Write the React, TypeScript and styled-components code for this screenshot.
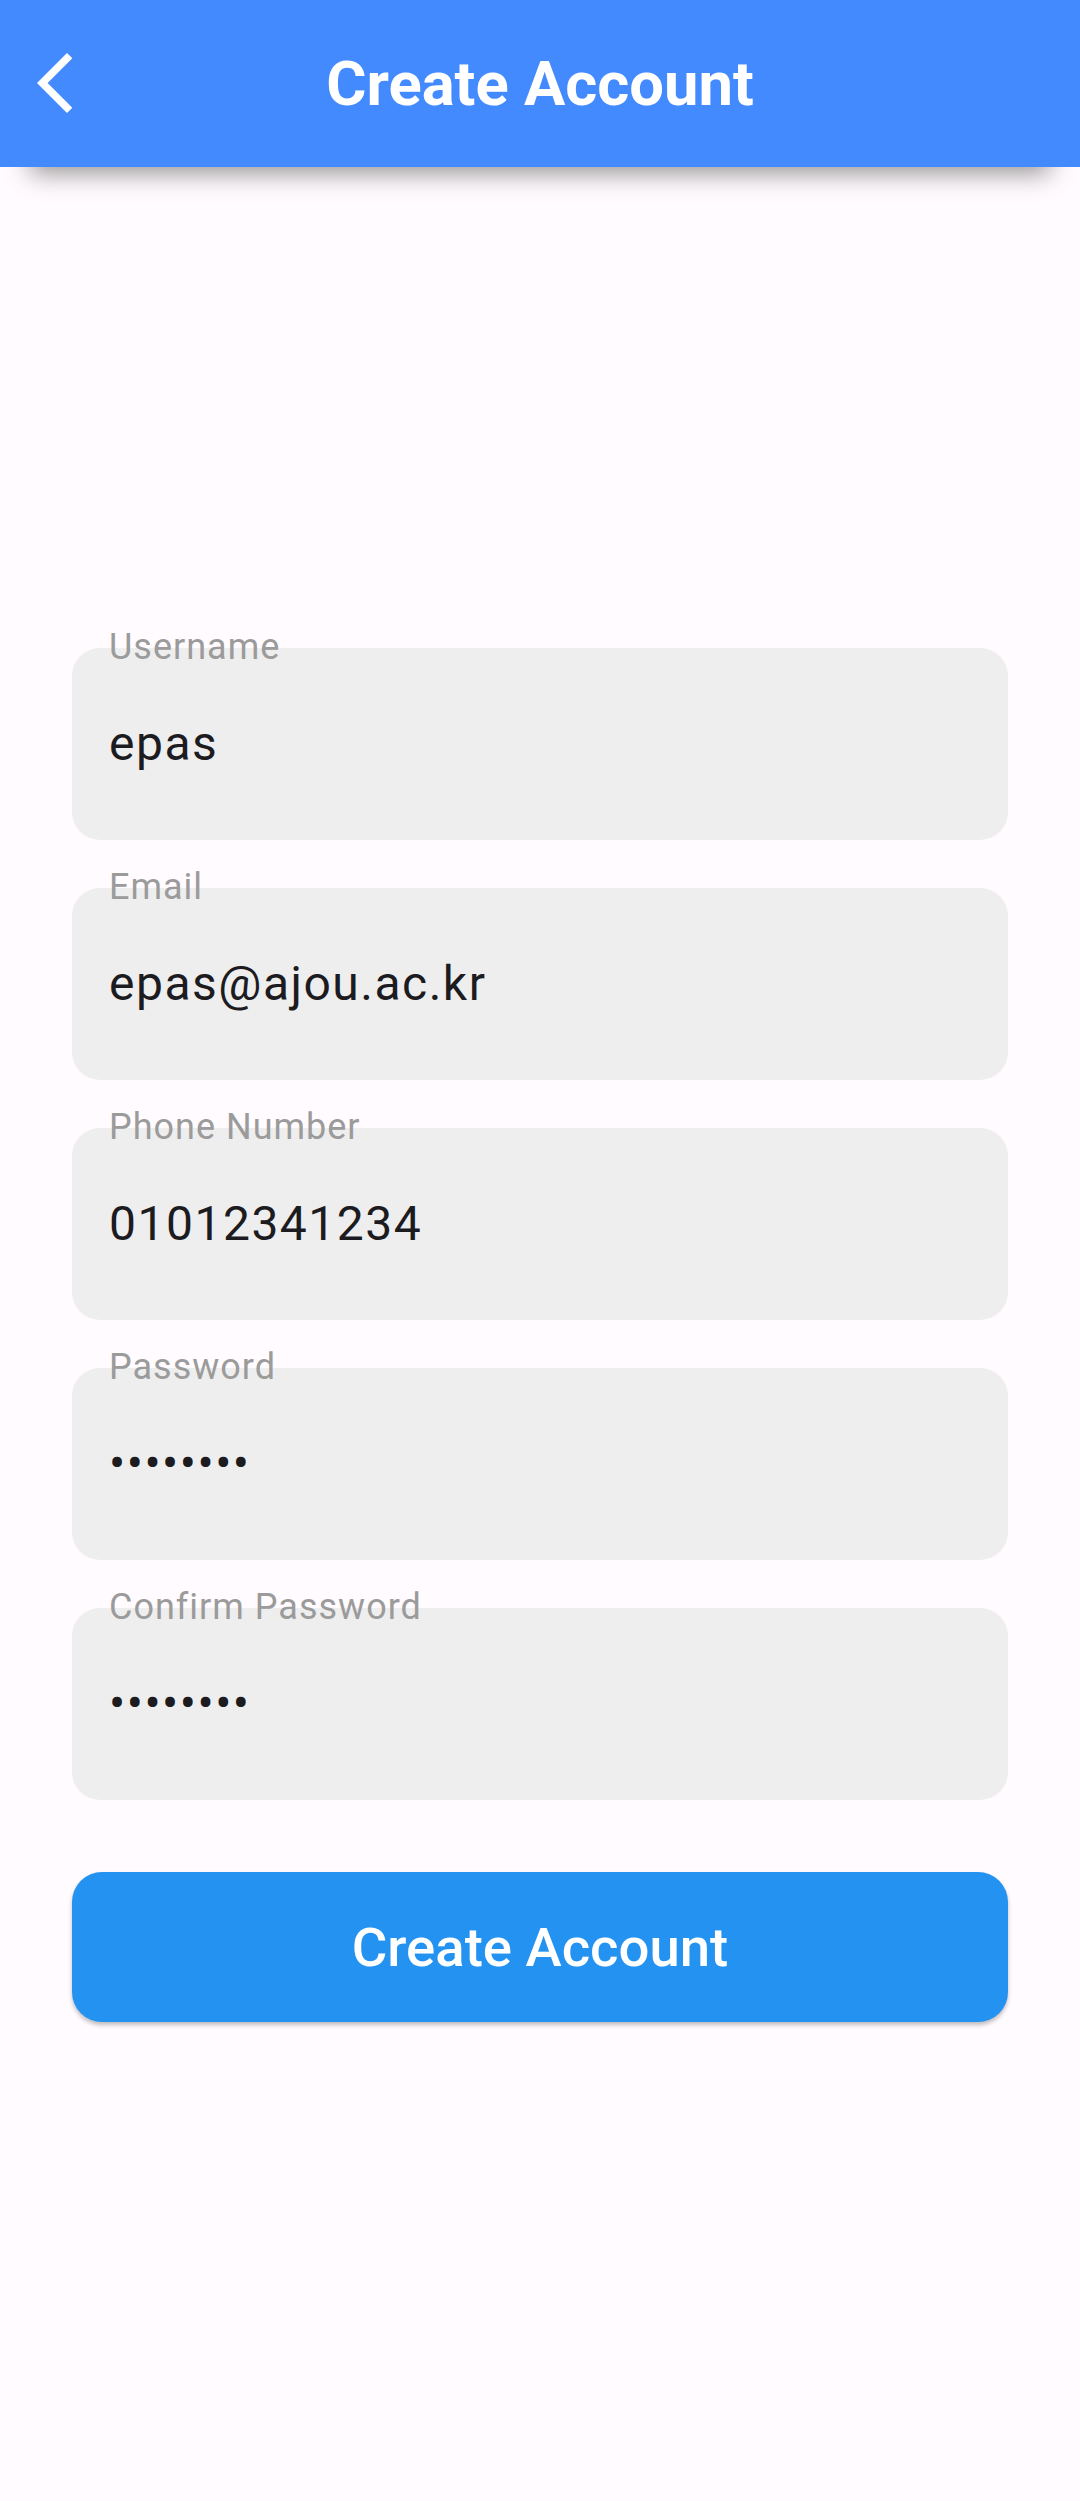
import React from "react";
import styled, { createGlobalStyle } from "styled-components";

const GlobalStyle = createGlobalStyle`
  html, body {
    margin: 0;
    padding: 0;
    background: #fffbfe;
  }
  body {
    font-family: Roboto, "Noto Sans", "Liberation Sans", sans-serif;
  }
  * { box-sizing: border-box; }
`;

const Page = styled.div`
  min-height: 2501px;
  width: 1080px;
  background: #fffbfe;
  display: flex;
  flex-direction: column;
`;

const Header = styled.header`
  position: relative;
  height: 167px;
  background: #448aff;
  display: flex;
  align-items: center;
  justify-content: center;
  box-shadow: 0 36px 24px -30px rgba(0, 0, 0, 0.42);
  z-index: 1;
`;

const BackButton = styled.button`
  position: absolute;
  left: 19px;
  top: 47px;
  width: 72px;
  height: 72px;
  padding: 0;
  border: none;
  background: transparent;
  display: flex;
`;

const Title = styled.h1`
  margin: 0;
  font-family: Roboto, sans-serif;
  font-weight: 700;
  font-size: 61.5px;
  color: #ffffff;
  letter-spacing: 0;
`;

const Form = styled.main`
  display: flex;
  flex-direction: column;
  padding: 481px 72px 0 72px;
`;

const Fields = styled.div`
  display: flex;
  flex-direction: column;
  gap: 48px;
`;

const Field = styled.div`
  position: relative;
  height: 192px;
  background: #eeeeee;
  border-radius: 28px;
  display: flex;
  align-items: center;
  padding: 0 37px;
`;

const Label = styled.label`
  position: absolute;
  left: 37px;
  top: -22px;
  font-family: Roboto, sans-serif;
  font-size: 36px;
  line-height: 42px;
  letter-spacing: 1px;
  color: #9b9b9b;
  white-space: nowrap;
`;

const Value = styled.div<{ $secret?: boolean }>`
  font-family: Roboto, sans-serif;
  font-size: 48px;
  line-height: 56px;
  letter-spacing: ${(p) => (p.$secret ? "1.5px" : "1.5px")};
  color: #1c1b1f;
  white-space: nowrap;
`;

const SubmitButton = styled.button`
  margin-top: 72px;
  height: 150px;
  border: none;
  border-radius: 30px;
  background: #2492f1;
  color: #ffffff;
  font-family: Roboto, sans-serif;
  font-weight: 500;
  font-size: 54.5px;
  box-shadow: 0 3px 4px rgba(0, 0, 0, 0.25);
  display: flex;
  align-items: center;
  justify-content: center;
`;

const fields: { label: string; value: string; secret?: boolean }[] = [
  { label: "Username", value: "epas" },
  { label: "Email", value: "epas@ajou.ac.kr" },
  { label: "Phone Number", value: "01012341234" },
  { label: "Password", value: "••••••••", secret: true },
  { label: "Confirm Password", value: "••••••••", secret: true },
];

export default function App() {
  return (
    <>
      <GlobalStyle />
      <Page>
        <Header>
          <BackButton aria-label="Back">
            <svg width="72" height="72" viewBox="0 0 24 24">
              <path
                d="M17.77 3.77L16 2 6 12l10 10 1.77-1.77L9.54 12z"
                fill="#ffffff"
              />
            </svg>
          </BackButton>
          <Title>Create Account</Title>
        </Header>
        <Form>
          <Fields>
            {fields.map((f) => (
              <Field key={f.label}>
                <Label>{f.label}</Label>
                <Value $secret={f.secret}>{f.value}</Value>
              </Field>
            ))}
          </Fields>
          <SubmitButton>Create Account</SubmitButton>
        </Form>
      </Page>
    </>
  );
}
